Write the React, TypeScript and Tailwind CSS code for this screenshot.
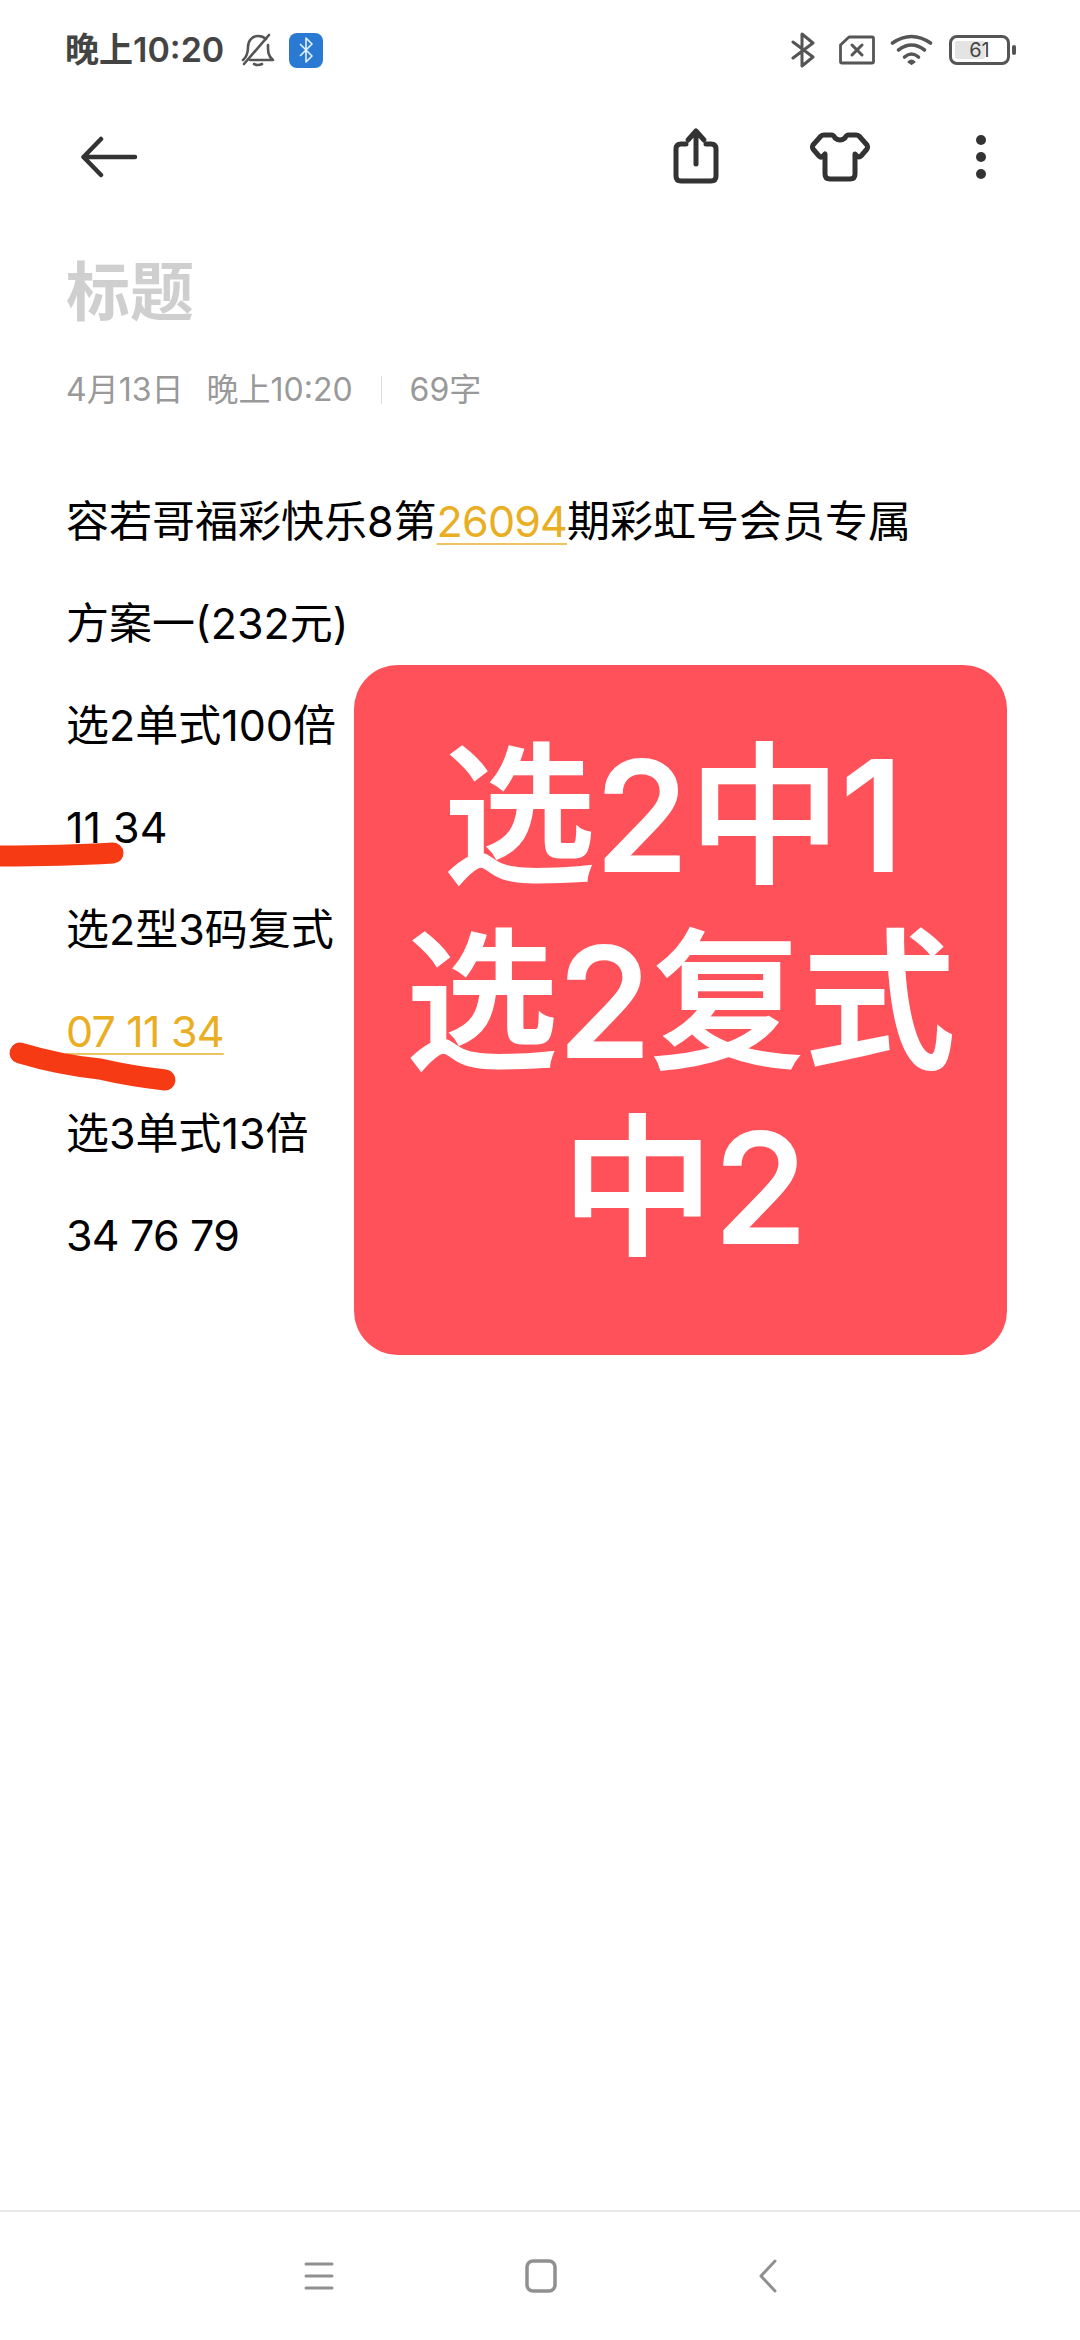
import React from "react";

const fontStack = '"Inter", "Noto Sans CJK SC", sans-serif';

function StatusBar() {
  return (
    <div className="h-[100px] flex items-center pl-[65px] pr-[64px] text-[#444]">
      <span className="text-[34px] font-semibold leading-none">晚上10:20</span>
      <svg className="ml-[17px]" width="34" height="34" viewBox="0 0 34 34" fill="none" stroke="#555" strokeWidth="2.6" strokeLinecap="round" strokeLinejoin="round">
        <path d="M2 27 C7 23 7 18 7 14 C7 8 11 3 17 3 C20 3 23 4 25 6" />
        <path d="M27 12 C27 19 27 23 32 27 L9 27" />
        <path d="M28 2 L3 31" />
        <path d="M13 31 Q17 33 21 31" />
      </svg>
      <div className="ml-[14px] w-[34px] h-[35px] rounded-[8px] bg-[#2a7ad4] flex items-center justify-center">
        <svg width="14" height="26" viewBox="0 0 14 26" fill="none" stroke="#e3f2ff" strokeWidth="1.6" strokeLinejoin="round">
          <path d="M1 7 L13 19 L7 25 L7 1 L13 7 L1 19" />
        </svg>
      </div>
      <div className="flex-1" />
      <svg width="24" height="36" viewBox="0 0 24 36" fill="none" stroke="#555" strokeWidth="3" strokeLinecap="round" strokeLinejoin="round">
        <path d="M2 10 L22 25 L11 34 L11 2 L22 11 L2 26" />
      </svg>
      <svg className="ml-[24px]" width="36" height="30" viewBox="0 0 36 30" fill="none" stroke="#555" strokeWidth="2.8" strokeLinecap="round" strokeLinejoin="round">
        <path d="M10 2 H33 Q34.500 2 34.500 3.500 V26.500 Q34.500 28 33 28 H3 Q1.500 28 1.500 26.500 V10 Z" />
        <path d="M13 10 L23 20 M23 10 L13 20" strokeWidth="3" />
      </svg>
      <svg className="ml-[15px]" width="43" height="32" viewBox="0 0 42 32" fill="none" stroke="#555" strokeWidth="3.6" strokeLinecap="round">
        <path d="M2 9 Q21 -4 40 9" />
        <path d="M8 16 Q21 6 34 16" />
        <path d="M14 23 Q21 17 28 23" />
        <path d="M18 28 L21 30 L24 28 Q21 25 18 28 Z" fill="#555" strokeWidth="2" strokeLinejoin="round" />
      </svg>
      <div className="ml-[16px] relative w-[61px] h-[30px] rounded-[8px] border-[3px] border-[#555] overflow-hidden">
        <div className="h-full p-[3px]">
          <div className="h-full w-[61%] bg-[#e4e4e4] rounded-[2px]" />
        </div>
        <span className="absolute inset-0 flex items-center justify-center text-[20px] leading-none text-[#444]">61</span>
      </div>
      <div className="ml-[2px] w-[4px] h-[10px] rounded-[2px] bg-[#555]" />
    </div>
  );
}

function Toolbar() {
  return (
    <div className="h-[114px] flex items-center pl-[80px] pr-[94px]">
      <svg width="58" height="42" viewBox="0 0 56 42" fill="none" stroke="#333" strokeWidth="4.500" strokeLinecap="round" strokeLinejoin="round">
        <path d="M2.500 21 H54 M20 3 L2.500 21 L20 39" />
      </svg>
      <div className="flex-1" />
      <svg width="60" height="60" viewBox="0 0 60 60" fill="none" stroke="#333" strokeWidth="5" strokeLinecap="round" strokeLinejoin="round">
        <path d="M20 17 H15 Q10 17 10 22 V49 Q10 54 15 54 H45 Q50 54 50 49 V22 Q50 17 45 17 H40" />
        <path d="M30 37 V5 M22 13 L30 4 L38 13" />
      </svg>
      <svg className="ml-[84px]" width="60" height="60" viewBox="0 0 60 60" fill="none" stroke="#333" strokeWidth="5" strokeLinecap="round" strokeLinejoin="round">
        <path d="M21 8 H14 Q12 8 11 9 L3 18 Q2 20 3 22 L9 29 Q11 31 13 29 L15 27 V47 Q15 52 20 52 H40 Q45 52 45 47 V27 L47 29 Q49 31 51 29 L57 22 Q58 20 57 18 L49 9 Q48 8 46 8 H39 Q36 8 35 11 Q30 15 25 11 Q24 8 21 8 Z" />
      </svg>
      <div className="ml-[106px] flex flex-col gap-[7px]">
        <div className="w-[10px] h-[10px] rounded-full bg-[#333]" />
        <div className="w-[10px] h-[10px] rounded-full bg-[#333]" />
        <div className="w-[10px] h-[10px] rounded-full bg-[#333]" />
      </div>
    </div>
  );
}

const linkClass = "text-[#e9ae22] tracking-[-0.8px] underline decoration-2 decoration-[#ecc463] underline-offset-[6px]";

const rows: React.ReactNode[] = [
  <>容若哥福彩快乐8第<span className={linkClass}>26094</span>期彩虹号会员专属</>,
  "方案一(232元)",
  "选2单式100倍",
  "11 34",
  "选2型3码复式",
  <span className={linkClass}>07 11 34</span>,
  "选3单式13倍",
  <span className="tracking-[-0.8px]">34 76 79</span>,
];

export default function App() {
  return (
    <div className="relative w-[1080px] h-[2340px] bg-white flex flex-col overflow-hidden" style={{ fontFamily: fontStack }}>
      <StatusBar />
      <Toolbar />
      <div className="flex-1 pl-[66px]">
        <h1 className="mt-[33px] text-[64px] leading-[90px] font-bold text-[#cfcfcf]">标题</h1>
        <div className="mt-[31px] flex items-center text-[32px] leading-[44px] text-[#999]">
          <span>4月13日</span>
          <span className="ml-[23px]">晚上10:20</span>
          <div className="ml-[28px] mr-[28px] w-px h-[28px] bg-[#ddd]" />
          <span>69字</span>
        </div>
        <div className="mt-[58px] text-[43px] leading-[102px] text-black">
          {rows.map((r, i) => (
            <div key={i}>{r}</div>
          ))}
        </div>
      </div>
      <div className="h-[130px] border-t-2 border-[#e8e8e8] flex items-center justify-center">
        <svg width="30" height="30" viewBox="0 0 30 30" fill="none" stroke="#909090" strokeWidth="3" strokeLinecap="round">
          <path d="M2 3 H28 M2 15 H28 M2 27 H28" />
        </svg>
        <svg className="ml-[191px]" width="32" height="34" viewBox="0 0 32 34" fill="none" stroke="#909090" strokeWidth="3.500">
          <rect x="2" y="2" width="28" height="30" rx="6" />
        </svg>
        <svg className="ml-[202px]" width="18" height="34" viewBox="0 0 18 34" fill="none" stroke="#909090" strokeWidth="3" strokeLinecap="round" strokeLinejoin="round">
          <path d="M16 2 L2 17 L16 32" />
        </svg>
      </div>

      {/* overlays pasted on the screenshot */}
      <div className="absolute left-[354px] top-[665px] w-[653px] h-[690px] pb-[17px] rounded-[44px] bg-[#fe5159] flex flex-col items-center justify-center text-white text-[152px] leading-[186px] font-medium [-webkit-text-stroke:2px_#fff]">
        <div className="pr-[14px]">选2中1</div>
        <div>选2复式</div>
        <div className="pl-[8px]">中2</div>
      </div>
      <svg className="absolute left-0 top-[780px]" width="360" height="320" viewBox="0 0 360 320" fill="none" stroke="#f53a14" strokeLinecap="round" strokeLinejoin="round">
        <path d="M-10 76 Q60 76 113 73" strokeWidth="21" />
        <path d="M20 273 Q60 285 100 289 Q130 296 165 300" strokeWidth="21" />
      </svg>
    </div>
  );
}
